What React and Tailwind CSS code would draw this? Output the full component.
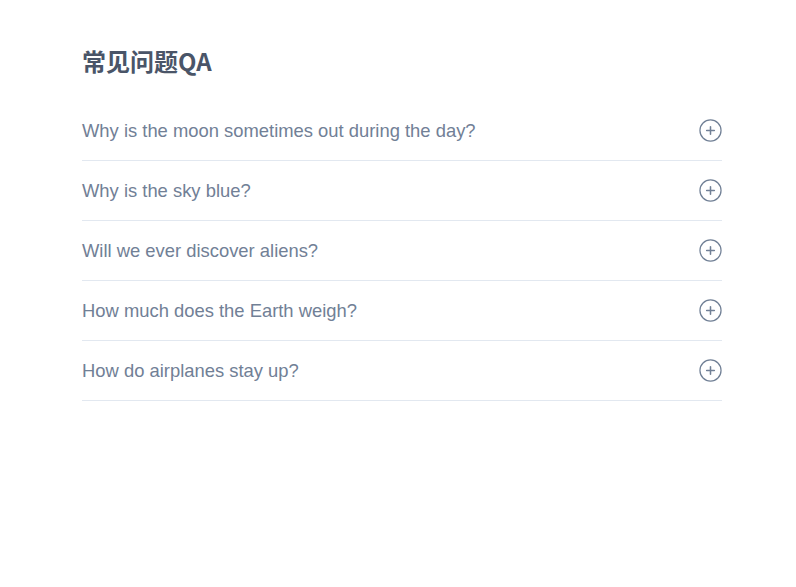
import React from "react";

const questions = [
  "Why is the moon sometimes out during the day?",
  "Why is the sky blue?",
  "Will we ever discover aliens?",
  "How much does the Earth weigh?",
  "How do airplanes stay up?",
];

function PlusCircle() {
  return (
    <svg width="23" height="23" viewBox="0 0 24 24" fill="none" stroke="#718096" strokeWidth="1.3" strokeLinecap="round">
      <circle cx="12" cy="12" r="11" />
      <path d="M12 8v8M8 12h8" strokeWidth="1.6" />
    </svg>
  );
}

export default function App() {
  return (
    <div className="min-h-[587px] bg-white" style={{ fontFamily: '"Liberation Sans", Arial, "Noto Sans CJK SC", sans-serif' }}>
      <div className="ml-[82px] w-[640px] pt-[45px]">
        <h1 className="text-[24px] leading-8 font-bold text-[#4a5568] mb-[24px] font-['Noto_Sans_CJK_SC',sans-serif]">常见问题QA</h1>
        <div>
          {questions.map((q) => (
            <div key={q} className="h-[60px] border-b border-[#e2e8f0] flex items-center justify-between">
              <span className="text-[18.4px] text-[#718096]">{q}</span>
              <PlusCircle />
            </div>
          ))}
        </div>
      </div>
    </div>
  );
}
